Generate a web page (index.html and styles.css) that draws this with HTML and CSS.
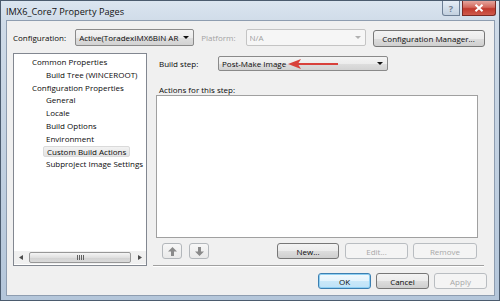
FILE: index.html
```html
<!DOCTYPE html>
<html lang="en">
<head>
  <meta charset="UTF-8" />
  <title>IMX6_Core7 Property Pages</title>
  <link rel="stylesheet" href="styles.css">
</head>
<body>

  <div class="window">
    <div class="titlebar">
      <span class="title">IMX6_Core7 Property Pages</span>
      <div class="caption-buttons">
        <span class="cap-btn help">?</span>
        <span class="cap-btn close">
          <svg width="10" height="8" viewBox="0 0 10 8"><path d="M1.5 0.8 L8.5 7.2 M8.5 0.8 L1.5 7.2" stroke="#fff" stroke-width="2" fill="none"/></svg>
        </span>
      </div>
    </div>

    <div class="client">
      <div class="config-row">
        <span class="label">Configuration:</span>
        <div class="combo config-combo">
          <span class="combo-text">Active(ToradexIMX6BIN AR</span>
          <span class="drop"></span>
        </div>
        <span class="label label-disabled platform-label">Platform:</span>
        <div class="combo combo-disabled platform-combo">
          <span class="combo-text">N/A</span>
          <span class="drop"></span>
        </div>
        <button class="btn manager-btn">Configuration Manager...</button>
      </div>

      <div class="main">
        <div class="tree">
          <div class="tree-items">
            <div class="node">Common Properties</div>
            <div class="node child">Build Tree (WINCEROOT)</div>
            <div class="node">Configuration Properties</div>
            <div class="node child">General</div>
            <div class="node child">Locale</div>
            <div class="node child">Build Options</div>
            <div class="node child">Environment</div>
            <div class="node child"><span class="selected">Custom Build Actions</span></div>
            <div class="node child">Subproject Image Settings</div>
          </div>
          <div class="hscroll">
            <span class="sarrow">
              <svg width="4" height="5" viewBox="0 0 4 5"><path d="M4 0 L0 2.5 L4 5 Z" fill="#4d4d4d"/></svg>
            </span>
            <span class="thumb"><span class="grip"></span></span>
            <span class="sarrow">
              <svg width="4" height="5" viewBox="0 0 4 5"><path d="M0 0 L4 2.5 L0 5 Z" fill="#4d4d4d"/></svg>
            </span>
          </div>
        </div>

        <div class="panel">
          <div class="step-row">
            <span class="label step-label">Build step:</span>
            <div class="combo step-combo">
              <span class="combo-text">Post-Make Image</span>
              <span class="drop"></span>
              <svg class="callout" width="50" height="10" viewBox="0 0 50 10">
                <path d="M0 5 L13 0 L10.5 4 L50 4 L50 6 L10.5 6 L13 10 Z" fill="#d8413b"/>
              </svg>
            </div>
          </div>

          <div class="label actions-label">Actions for this step:</div>
          <div class="listbox"></div>

          <div class="list-buttons">
            <button class="btn small-btn">
              <svg width="9" height="9" viewBox="0 0 9 9"><path d="M4.5 0 L9 4.5 L6 4.5 L6 9 L3 9 L3 4.5 L0 4.5 Z" fill="#8a8a8a"/></svg>
            </button>
            <button class="btn small-btn">
              <svg width="9" height="9" viewBox="0 0 9 9"><path d="M4.5 9 L9 4.5 L6 4.5 L6 0 L3 0 L3 4.5 L0 4.5 Z" fill="#8a8a8a"/></svg>
            </button>
            <span class="spacer"></span>
            <button class="btn new-btn">New...</button>
            <button class="btn btn-disabled edit-btn">Edit...</button>
            <button class="btn btn-disabled remove-btn">Remove</button>
          </div>

          <div class="separator"></div>

          <div class="dialog-buttons">
            <button class="btn btn-default">OK</button>
            <button class="btn">Cancel</button>
            <button class="btn btn-disabled">Apply</button>
          </div>
        </div>
      </div>
    </div>
  </div>

</body>
</html>
```

FILE: styles.css
```css
* {
  box-sizing: border-box;
}

body {
  margin: 0;
  width: 500px;
  height: 301px;
  overflow: hidden;
  font-family: "Open Sans", "Liberation Sans", sans-serif;
  font-size: 8px;
  color: #0a0a0a;
  background: #ffffff;
}

.window {
  width: 500px;
  height: 301px;
  border: 1px solid #4b5b6e;
  padding: 0 4px 4px 5px;
  background: linear-gradient(#dbe5f0 0, #cfdbe8 22px, #b4c6da 100%);
  display: flex;
  flex-direction: column;
}

/* title bar */

.titlebar {
  height: 19px;
  display: flex;
  justify-content: space-between;
  align-items: flex-start;
}

.title {
  padding-top: 4px;
  font-size: 9.2px;
  color: #111;
}

.caption-buttons {
  display: flex;
  gap: 2px;
  margin-right: -1px;
}

.cap-btn {
  height: 15px;
  display: flex;
  align-items: center;
  justify-content: center;
  border: 1px solid #6d7f95;
  border-top: none;
}

.help {
  width: 18px;
  border-radius: 0 0 0 3px;
  background: linear-gradient(#e6eef6, #c2d0df);
  color: #6f7f92;
  font-size: 9px;
  font-weight: bold;
}

.close {
  width: 34px;
  border-radius: 0 0 3px 0;
  border-color: #7a2a24;
  background: linear-gradient(#e5a59d 0, #d3685c 45%, #c0392d 55%, #cf5a4c 100%);
}

/* client area */

.client {
  flex: 1;
  background: #f0f0f0;
  border: 1px solid #8e9db0;
  padding: 7px 5px 0 6px;
  display: flex;
  flex-direction: column;
}

.config-row {
  height: 18px;
  display: flex;
  align-items: center;
}

.label {
  white-space: nowrap;
}

.label-disabled {
  color: #a3a3a3;
}

.combo {
  position: relative;
  height: 17px;
  display: flex;
  align-items: center;
  border: 1px solid #8a8a8a;
  border-radius: 2px;
  background: linear-gradient(#f4f4f4 0, #ececec 50%, #dedede 51%, #d2d2d2 100%);
  padding: 0 4px 0 3px;
}

.combo-text {
  flex: 1;
  overflow: hidden;
  white-space: nowrap;
}

.drop {
  width: 0;
  height: 0;
  margin-left: 4px;
  border-left: 3px solid transparent;
  border-right: 3px solid transparent;
  border-top: 3px solid #111;
}

.config-combo {
  width: 119px;
  margin-left: 9px;
}

.platform-label {
  margin-left: 7px;
}

.combo-disabled {
  background: #f6f6f6;
  border-color: #c4c4c4;
  color: #a0a0a0;
}

.combo-disabled .drop {
  border-top-color: #b0b0b0;
}

.platform-combo {
  width: 120px;
  margin-left: 10px;
}

.btn {
  height: 16px;
  padding: 0;
  font-family: inherit;
  font-size: 8px;
  color: #0a0a0a;
  border: 1px solid #777;
  border-radius: 3px;
  background: linear-gradient(#f3f3f3 0, #ebebeb 50%, #dddddd 51%, #cfcfcf 100%);
  display: flex;
  align-items: center;
  justify-content: center;
}

.btn-disabled {
  color: #a8a8a8;
  border-color: #b9bdc1;
  background: #f4f4f4;
}

.btn-default {
  border-color: #3c7fb1;
  background: linear-gradient(#f2f9fd 0, #e3f3fc 50%, #c9e8f9 51%, #bfe2f7 100%);
  box-shadow: inset 0 0 0 1px #8fd0f3;
}

.manager-btn {
  width: 112px;
  height: 17px;
  margin-left: 7px;
  margin-top: 2px;
}

/* main area */

.main {
  margin-top: 7px;
  display: flex;
  gap: 6px;
}

.tree {
  width: 134px;
  height: 213px;
  border: 1px solid #828790;
  background: #ffffff;
  display: flex;
  flex-direction: column;
}

.tree-items {
  flex: 1;
  padding-top: 2px;
  padding-left: 18px;
}

.node {
  height: 12.8px;
  line-height: 12.8px;
  white-space: nowrap;
}

.node.child {
  padding-left: 14px;
}

.selected {
  margin-left: -3px;
  padding: 0 3px;
  display: inline-block;
  height: 11px;
  line-height: 10px;
  border: 1px solid #dadada;
  border-radius: 2px;
  background: linear-gradient(#f2f2f2, #e4e4e4);
}

.hscroll {
  height: 13px;
  margin-bottom: 1px;
  display: flex;
  align-items: center;
  background: #f0f0f0;
}

.sarrow {
  width: 13px;
  display: flex;
  justify-content: center;
}

.thumb {
  flex: 1;
  height: 11px;
  margin: 0 2px;
  border: 1px solid #979797;
  border-radius: 2px;
  background: linear-gradient(#f5f5f5, #e0e0e0 50%, #d2d2d2 51%, #dadada);
  display: flex;
  align-items: center;
  justify-content: center;
}

.grip {
  width: 7px;
  height: 5px;
  background: repeating-linear-gradient(90deg, #606060 0 1px, transparent 1px 2px);
}

/* right panel */

.panel {
  width: 334px;
  display: flex;
  flex-direction: column;
}

.step-row {
  margin-top: 3px;
  display: flex;
  align-items: center;
}

.step-label {
  width: 65px;
  padding-left: 6px;
}

.step-combo {
  width: 170px;
  height: 15px;
}

.callout {
  position: absolute;
  left: 69px;
  top: 2px;
}

.actions-label {
  margin-top: 13px;
  padding-left: 6px;
  height: 11px;
  line-height: 11px;
}

.listbox {
  width: 322px;
  height: 143px;
  margin-left: 3px;
  border: 1px solid #a0a0a0;
  background: #ffffff;
}

.list-buttons {
  margin-top: 5px;
  margin-left: 9px;
  display: flex;
}

.small-btn {
  width: 20px;
  margin-right: 7px;
  border-color: #b3b7bb;
  background: linear-gradient(#f7f7f7, #e9e9e9);
}

.spacer {
  flex: 1;
}

.new-btn {
  width: 62px;
}

.edit-btn {
  width: 63px;
  margin-left: 6px;
}

.remove-btn {
  width: 64px;
  margin-left: 5px;
  margin-right: 10px;
}

.separator {
  margin-top: 6px;
  width: 331px;
  height: 2px;
  border-top: 1px solid #a0a0a0;
  border-bottom: 1px solid #ffffff;
}

.dialog-buttons {
  margin-top: 6px;
  display: flex;
  justify-content: flex-end;
  gap: 5px;
}

.dialog-buttons .btn {
  width: 53px;
}
```
